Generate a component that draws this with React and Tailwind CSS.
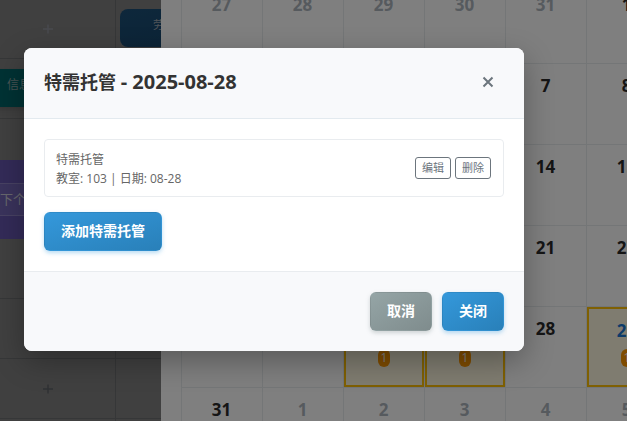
import React from "react";

const weeks = [
  [["27", "o"], ["28", "o"], ["29", "o"], ["30", "o"], ["31", "o"], ["1"], ["2"]],
  [["3"], ["4"], ["5"], ["6"], ["7"], ["8"], ["9"]],
  [["10"], ["11"], ["12"], ["13"], ["14"], ["15"], ["16"]],
  [["17"], ["18"], ["19"], ["20"], ["21"], ["22"], ["23"]],
  [["24"], ["25"], ["26", "h"], ["27", "h"], ["28"], ["29", "t"], ["30"]],
  [["31"], ["1", "o"], ["2", "o"], ["3", "o"], ["4", "o"], ["5", "o"], ["6", "o"]],
];

function Day({ day, kind }) {
  const marked = kind === "h" || kind === "t";
  const color = kind === "o" ? "text-[#adb5bd]" : kind === "t" ? "text-[#1976d2]" : "text-[#2b2b2b]";
  return (
    <div className="h-[81px] border-l border-t border-[#e9ecef]">
      <div
        className={
          "flex h-20 flex-col items-center gap-1.5 pt-2.5 " +
          (marked ? "border-2 border-[#ffc107] bg-[#fff8e1]" : "")
        }
      >
        <span className={"pr-px text-[17px] font-bold leading-6 " + color}>{day}</span>
        {marked && (
          <span className="rounded-full bg-[#ff9800] px-[3px] text-xs leading-[18px] text-white">1</span>
        )}
      </div>
    </div>
  );
}

function Slot({ children }) {
  return (
    <div className="flex h-[60px] items-center justify-center border-b border-r border-[#6d6f71]">
      {children}
    </div>
  );
}

function Plus({ className }) {
  return (
    <svg className={"h-3 w-3 " + className} viewBox="0 0 12 12" stroke="currentColor" strokeWidth="1.4" aria-hidden="true">
      <path d="M6 1.5v9M1 6h10" />
    </svg>
  );
}

function Timetable() {
  return (
    <div className="relative w-[161px] shrink-0 overflow-hidden bg-[#808080] text-xs">
      <div className="-ml-5 -mt-px grid grid-cols-[136px_120px]">
        <Slot><Plus className="text-[#92959f]" /></Slot>
        <div className="h-[60px] border-b border-[#6d6f71] pl-1 pt-2.5">
          <div className="h-[38px] rounded-lg bg-linear-to-br from-[#1c5078] to-[#174468] pl-[33px] text-[11px] leading-8 text-[#a0a8b0]">
            劳动
          </div>
        </div>
        <div className="h-[60px] border-b border-r border-[#6d6f71] pt-2.5">
          <div className="h-[38px] w-24 bg-[#006468] pl-[27px] leading-8 text-[#8fa6a7] shadow-md">信息科技</div>
        </div>
        <Slot />
        <Slot />
        <Slot />
        <Slot />
        <Slot />
        <Slot />
        <Slot />
        <Slot />
        <Slot />
        <Slot><Plus className="text-[#5f6368]" /></Slot>
        <Slot />
        <Slot />
        <Slot />
      </div>
      <div className="absolute left-0 top-40 h-[79px] w-24 bg-[#6656b0] pt-[23px] text-[13px] text-[#cfcfda]">
        <div className="border-y border-white/20 bg-white/10 leading-[31px]">下个月</div>
      </div>
    </div>
  );
}

const button =
  "h-[39px] rounded-md border border-transparent px-4 pb-0.5 text-sm font-bold text-white";
const blue = " bg-linear-to-br from-[#3498db] to-[#2980b9] shadow-[0_2px_4px_rgba(52,152,219,0.35)]";
const gray = " bg-linear-to-br from-[#95a5a6] to-[#7f8c8d] shadow-[0_2px_4px_rgba(127,140,141,0.35)]";
const small =
  "h-[22px] rounded-[3px] border border-[#6c757d] bg-white px-1.5 text-[11px] leading-5 text-[#6c757d]";

export default function App() {
  return (
    <div className="relative h-screen overflow-hidden bg-white font-['Open_Sans','Noto_Sans_CJK_SC',sans-serif]">
      <div className="flex h-full">
        <Timetable />
        <main className="min-w-0 flex-1 overflow-hidden pl-5">
          <div className="-mt-[18px] grid grid-cols-[repeat(7,81px)]">
            {weeks.flatMap((week, w) =>
              week.map(([day, kind], d) => <Day key={w + "-" + d} day={day} kind={kind} />)
            )}
          </div>
        </main>
      </div>

      <div className="absolute inset-0 bg-black/50 pl-6 pt-12">
        <div
          role="dialog"
          aria-labelledby="dialog-title"
          className="w-full max-w-[500px] overflow-hidden rounded-lg bg-white shadow-[0_10px_30px_rgba(0,0,0,0.3)]"
        >
          <header className="flex h-[71px] items-center justify-between border-b border-[#e3eaef] bg-[#f8f9fb] px-5 pb-0.5">
            <h2 id="dialog-title" className="text-lg font-bold text-[#333]">
              特需托管 <span className="text-xl">- 2025-08-28</span>
            </h2>
            <button type="button" aria-label="关闭窗口" className="flex h-8 w-8 items-center justify-center text-[#6c757d]">
              <svg className="h-3 w-3" viewBox="0 0 12 12" stroke="currentColor" strokeWidth="2" aria-hidden="true">
                <path d="M1.5 1.5l9 9M10.5 1.5l-9 9" />
              </svg>
            </button>
          </header>
          <div className="p-5">
            <div className="mb-[15px] flex h-[58px] items-center justify-between rounded border border-[#e9ecef] px-[11px]">
              <div className="pt-0.5 text-xs leading-[19px] text-[#666]">
                <p>特需托管</p>
                <p>教室: 103 | 日期: 08-28</p>
              </div>
              <div className="flex gap-1 pr-px">
                <button type="button" className={small}>编辑</button>
                <button type="button" className={small}>删除</button>
              </div>
            </div>
            <button type="button" className={button + blue}>添加特需托管</button>
          </div>
          <footer className="flex justify-end gap-2.5 border-t border-[#e9ecef] bg-[#f8f9fb] p-5">
            <button type="button" className={button + gray}>取消</button>
            <button type="button" className={button + blue}>关闭</button>
          </footer>
        </div>
      </div>
    </div>
  );
}
